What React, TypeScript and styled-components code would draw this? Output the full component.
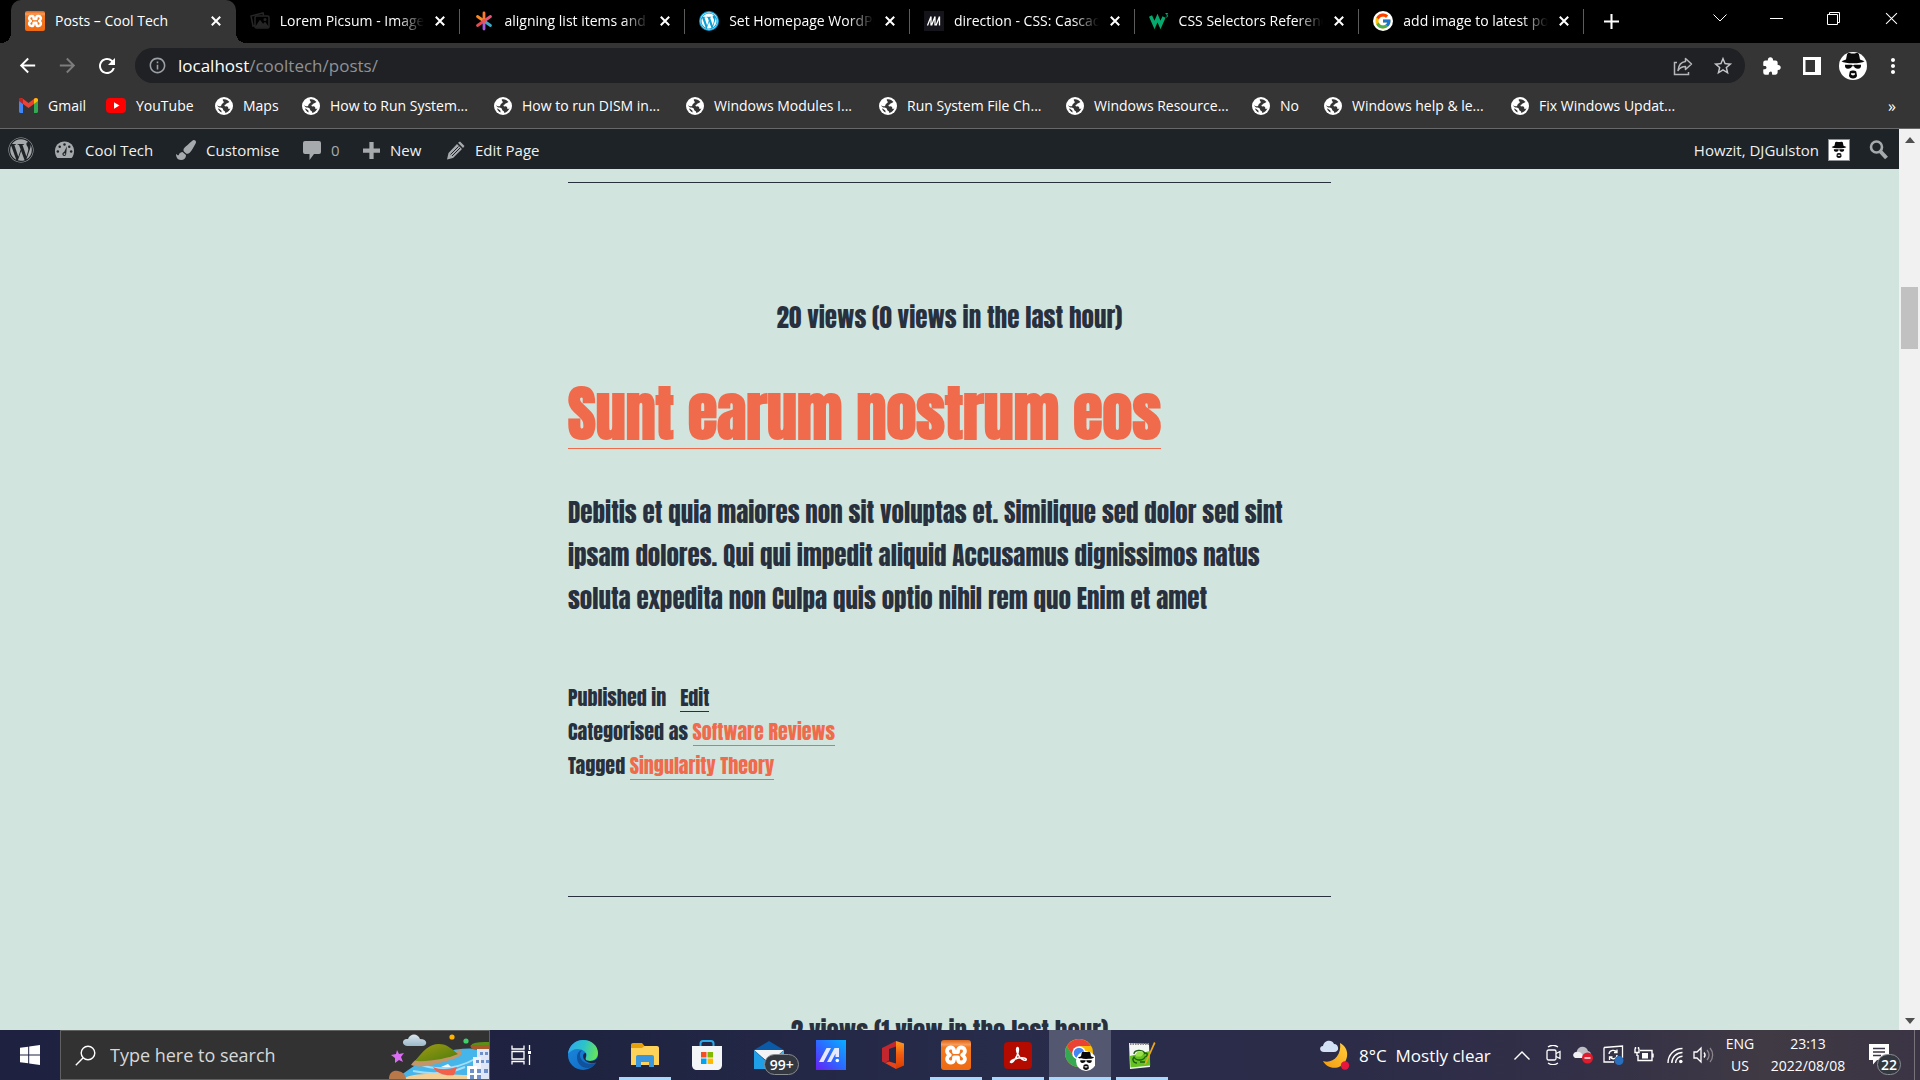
import React from "react";
import styled, { createGlobalStyle } from "styled-components";
import { FcGoogle } from "react-icons/fc";
import { FaWordpress, FaPaintBrush } from "react-icons/fa";
import { IoExtensionPuzzle } from "react-icons/io5";
import { MdStarOutline, MdInfoOutline, MdArrowBack, MdArrowForward, MdRefresh, MdMoreVert } from "react-icons/md";

const ui = `"Segoe UI", "Open Sans", "Noto Sans", sans-serif`;
const poster = `Impact, Anton, "Roboto Condensed", sans-serif`;

const Global = createGlobalStyle`
  * { box-sizing: border-box; }
  html, body { margin: 0; background: #d1e4dd; }
  body { font-family: ${ui}; overflow: hidden; }
  button, input { font: inherit; color: inherit; background: none; border: 0; padding: 0; margin: 0; outline: 0; }
  svg { display: block; flex: none; }
`;

const Screen = styled.div`
  display: flex;
  flex-direction: column;
  height: 100vh;
`;

/* ---------- browser chrome ---------- */

const TabStrip = styled.div`
  display: flex;
  flex: none;
  height: 43px;
  padding-left: 11px;
  background: #000;
  color: #fff;
`;
const Tabs = styled.div`
  display: flex;
  flex: 0 1 1573px;
  min-width: 0;
`;
const TabBox = styled.div<{ $active?: boolean }>`
  position: relative;
  display: flex;
  flex: 1 1 0;
  min-width: 0;
  align-items: center;
  gap: 8px;
  padding: 0 12px 1px 14px;
  border-radius: 10px 10px 0 0;
  background: ${(p) => (p.$active ? "#353535" : "transparent")};
  &::before, &::after {
    content: "";
    display: ${(p) => (p.$active ? "block" : "none")};
    position: absolute;
    bottom: 0;
    width: 10px;
    height: 10px;
  }
  &::before { left: -10px; background: radial-gradient(circle at 0 0, transparent 10px, #353535 10px); }
  &::after { right: -10px; background: radial-gradient(circle at 100% 0, transparent 10px, #353535 10px); }
`;
const TabDivider = styled.span<{ $hidden?: boolean }>`
  flex: none;
  width: 1px;
  height: 25px;
  margin-left: -1px;
  align-self: center;
  background: ${(p) => (p.$hidden ? "transparent" : "#5c5c5c")};
`;
const TabTitle = styled.button<{ $fade?: boolean }>`
  flex: 1;
  min-width: 0;
  overflow: hidden;
  padding-left: 2px;
  font-size: 14px;
  line-height: 20px;
  text-align: left;
  white-space: nowrap;
  mask-image: ${(p) => (p.$fade ? "linear-gradient(90deg, #000 82%, transparent 100%)" : "none")};
`;
const IconButton = styled.button<{ $w: number; $color?: string }>`
  display: flex;
  flex: none;
  align-items: center;
  justify-content: center;
  width: ${(p) => p.$w}px;
  color: ${(p) => p.$color || "#fff"};
`;
const WindowButtons = styled.div`
  display: flex;
  height: 36px;
  margin-left: auto;
`;

const Toolbar = styled.div`
  display: flex;
  flex: none;
  align-items: center;
  height: 45px;
  padding: 0 8px 0 7px;
  background: #353535;
`;
const AddressBar = styled.label`
  display: flex;
  flex: 1;
  align-items: center;
  min-width: 0;
  height: 35px;
  margin: 0 7px 0 8px;
  padding: 0 2px 0 13px;
  border-radius: 18px;
  background: #202124;
  color: #9aa0a6;
`;
const Address = styled.div`
  flex: 1;
  padding-left: 11px;
  font-size: 17px;
  line-height: 24px;
  color: #8f9296;
  b { font-weight: 400; color: #fff; }
`;
const Bookmarks = styled.nav`
  display: flex;
  flex: none;
  align-items: center;
  height: 41px;
  padding: 0 10px 5px 19px;
  border-bottom: 1px solid #66686a;
  background: #353535;
  color: #fff;
  & > button { margin-left: auto; }
`;
const Bookmark = styled.a<{ $w: number }>`
  display: flex;
  align-items: center;
  flex: none;
  gap: 10px;
  width: ${(p) => p.$w}px;
  font-size: 14px;
  line-height: 20px;
  white-space: nowrap;
  color: inherit;
  text-decoration: none;
`;

/* ---------- page ---------- */

const Viewport = styled.div`
  display: flex;
  flex: 1;
  min-height: 0;
`;
const Page = styled.div`
  display: flex;
  flex-direction: column;
  flex: 1;
  min-width: 0;
  overflow: hidden;
  background: #d1e4dd;
`;
const AdminBar = styled.header`
  display: flex;
  flex: none;
  align-items: center;
  height: 40px;
  padding: 2px 8px 0;
  background: #1d2327;
  color: #f0f0f1;
  font-size: 15px;
  line-height: 22px;
  svg { color: #a7aaad; }
`;
const AdminLink = styled.a<{ $w: number; $muted?: boolean }>`
  display: flex;
  flex: none;
  align-items: center;
  gap: 10px;
  width: ${(p) => p.$w}px;
  white-space: nowrap;
  color: ${(p) => (p.$muted ? "#a7aaad" : "inherit")};
  text-decoration: none;
`;
const Account = styled.a`
  display: flex;
  align-items: center;
  gap: 9px;
  margin: 0 17px 0 auto;
  color: inherit;
  text-decoration: none;
`;
const Avatar = styled.span`
  padding: 1px;
  border: 1px solid #8c8f94;
  background: #fff;
`;
const Column = styled.main`
  width: 763px;
  max-width: 100%;
  margin: 0 auto;
  font-family: ${poster};
  color: #28303d;
`;
const Post = styled.article`
  padding-top: 13px;
`;
const Rule = styled.hr`
  height: 1px;
  margin: 0;
  border: 0;
  background: #28303d;
`;
const Views = styled.p`
  margin: 114px 0 0;
  font-size: 25px;
  line-height: 42px;
  text-align: center;
`;
const Title = styled.h2`
  margin: 35px 0 0;
  font-size: 60px;
  line-height: 80px;
  font-weight: 700;
`;
const PostLink = styled.a<{ $dark?: boolean }>`
  display: inline-block;
  color: ${(p) => (p.$dark ? "#28303d" : "#f06b4c")};
  border-bottom: 1px solid;
  text-decoration: none;
`;
const TitleLink = styled(PostLink)`
  line-height: 68px;
`;
const Excerpt = styled.p`
  margin: 37px 0 61px;
  font-size: 25px;
  line-height: 43px;
`;
const Meta = styled.footer`
  padding-bottom: 113px;
  font-size: 20px;
  line-height: 34px;
  ${PostLink} { line-height: 27px; }
`;
const EditGap = styled.span`
  padding-right: 14px;
`;
const ScrollTrack = styled.div`
  display: flex;
  flex: none;
  flex-direction: column;
  justify-content: space-between;
  align-items: center;
  width: 21px;
  padding: 8px 0 6px;
  background: #f1f1f1;
`;
const Thumb = styled.div`
  flex: none;
  width: 17px;
  height: 62px;
  margin: 144px 0 auto;
  background: #c1c1c1;
`;

/* ---------- taskbar ---------- */

const Taskbar = styled.footer`
  display: flex;
  flex: none;
  height: 50px;
  background: linear-gradient(90deg, #1f2140 0, #1e2340 30%, #282c4b 52%, #2c2c48 70%, #322f47 82%, #403a44 92%, #3a3444 100%);
  color: #fff;
`;
const SearchBox = styled.label`
  display: flex;
  align-items: center;
  flex: none;
  width: 430px;
  padding-left: 14px;
  border: 1px solid #606060;
  background: #323232;
  overflow: hidden;
`;
const SearchInput = styled.input`
  flex: 1;
  min-width: 0;
  padding-left: 14px;
  font-size: 18px;
  &::placeholder { color: #d8d8d8; opacity: 1; }
`;
const Apps = styled.div`
  display: flex;
  flex: 0 1 621px;
`;
const AppButton = styled.button<{ $open?: boolean; $active?: boolean }>`
  position: relative;
  display: flex;
  flex: 1;
  align-items: center;
  justify-content: center;
  background: ${(p) => (p.$active ? "#545770" : "transparent")};
  &::after {
    content: "";
    position: absolute;
    bottom: 0;
    left: ${(p) => (p.$active ? 0 : 5)}px;
    right: ${(p) => (p.$active ? 0 : 5)}px;
    height: 3px;
    background: ${(p) => (p.$open ? "#a9d6fb" : "transparent")};
  }
`;
const Count = styled.span<{ $round?: boolean }>`
  position: absolute;
  left: ${(p) => (p.$round ? 13 : 26)}px;
  top: 24px;
  width: ${(p) => (p.$round ? 24 : 35)}px;
  height: 21px;
  border: 1px solid #8a8d93;
  border-radius: 11px;
  background: #33373f;
  font-size: 14px;
  font-weight: 600;
  line-height: 19px;
  text-align: center;
`;
const Tray = styled.div`
  display: flex;
  align-items: center;
  margin-left: auto;
`;
const Weather = styled.button`
  display: flex;
  align-items: center;
  gap: 9px;
  width: 184px;
  font-size: 17px;
  white-space: nowrap;
`;
const Stack = styled.button<{ $w: number }>`
  width: ${(p) => p.$w}px;
  height: 50px;
  padding-bottom: 1px;
  font-size: 14px;
  line-height: 22px;
  text-align: center;
`;
const Notices = styled.button`
  position: relative;
  width: 50px;
  height: 50px;
  margin-left: 13px;
  padding: 0 0 2px 5px;
`;
const DesktopEdge = styled.span`
  width: 6px;
  height: 50px;
  border-left: 1px solid #77727a;
`;

/* ---------- drawings ---------- */

const Close = ({ s = 10, w = 2 }: { s?: number; w?: number }) => (
  <svg width={s} height={s} viewBox="0 0 10 10" stroke="#fff" strokeWidth={w} fill="none"><path d="M.8.8 9.2 9.2M9.2.8.8 9.2" /></svg>
);
const Globe = () => (
  <svg width="18" height="18" viewBox="0 0 18 18">
    <circle cx="9" cy="9" r="9" fill="#fff" />
    <path d="M8 2.300c2.500-.5 5 .7 6.500 2.700-1 .2-1.300 1.300-2.300 1.300-1.200 0-1 1.500-2.200 1.500-.8.200-.7 1.700.8 1.600 2-.2 2.600.8 2.500 2.200 0 1 1.700.3 2.200-1.200-.5 2.800-2.500 5-5.300 5.500.2-1.500-.5-1.700-1.400-2.200-1-.6-.5-1.800-1.400-2.400-1.200-.8-2.700-.5-3.900-1.300C2.500 9.200 2.200 8.300 2.200 8c.6.800 2 1.600 3.300 1.200 1.200-.3.400-1.500 1.500-2.300 1.300-.8 2.200-1 1.600-2.300C8.200 3.600 7.200 3.200 8 2.300z" fill="#353535" />
    <path d="M3 11.500c1.500.3 2 1.200 3 1.800.8.600.5 1.700.4 2.100-1.600-.8-2.900-2.200-3.400-3.900z" fill="#353535" />
  </svg>
);
const Xampp = ({ s }: { s: number }) => (
  <svg width={s} height={s} viewBox="0 0 30 30">
    <defs><linearGradient id="xo" x1="0" y1="0" x2="0" y2="1"><stop stopColor="#d9641a" /><stop offset=".15" stopColor="#f99a58" /><stop offset=".25" stopColor="#f47a20" /><stop offset="1" stopColor="#ee6a12" /></linearGradient></defs>
    <rect width="30" height="30" rx="3" fill="url(#xo)" />
    <path d="M10 7.500c-4 0-5 4-2.500 6.500l1.300 1-1.300 1c-2.500 2.500-1.500 6.500 2.500 6.500 2 0 3-1.500 3-3.500v-1.500h4v1.500c0 2 1 3.500 3 3.500 4 0 5-4 2.500-6.500l-1.300-1 1.300-1c2.500-2.500 1.500-6.500-2.500-6.500-2 0-3 1.500-3 3v1.500h-4v-1.500c0-1.500-1-3-3-3z" fill="none" stroke="#fff" strokeWidth="3.800" strokeLinejoin="round" />
  </svg>
);
const PictureStack = () => (
  <svg width="20" height="20" viewBox="0 0 20 20" fill="none" stroke="#262626" strokeWidth="1.500">
    <path d="M5 14.500 3 15 1 5l12-3 .6 2.500" /><rect x="5" y="5" width="14" height="12" rx="1.500" /><path d="m6 16 4-6 3 4 2-2 3 4z" fill="#262626" /><circle cx="15" cy="8.500" r=".8" />
  </svg>
);
const Asterisk = () => (
  <svg width="20" height="20" viewBox="0 0 20 20" strokeWidth="2.800" strokeLinecap="round">
    <path d="M10 10V2" stroke="#fb7a2e" /><path d="M10 10 3.500 5.500" stroke="#f78a25" /><path d="m10 10 6.500-4.500" stroke="#e4557c" />
    <path d="M10 10 3.500 14.500" stroke="#e8484a" /><path d="M10 10v8" stroke="#a55be0" /><path d="m10 10 6.500 4.500" stroke="#3fa9c4" /><circle cx="10" cy="10" r="2" fill="#ef5350" />
  </svg>
);
const WpFav = () => (
  <svg width="20" height="20" viewBox="0 0 20 20"><circle cx="10" cy="10" r="10" fill="#0c9fd6" /><foreignObject x="1" y="1" width="18" height="18"><FaWordpress size={18} color="#fff" /></foreignObject></svg>
);
const Mdn = () => (
  <svg width="20" height="20" viewBox="0 0 20 20"><rect width="20" height="20" fill="#15141a" /><path d="m3.500 14.500 3.500-9M7.500 14.500l3.500-9M12 14.500l3.500-9M7 5.500v9M11 5.500v9M15.500 5.500v9" fill="none" stroke="#fff" strokeWidth="1.300" /></svg>
);
const W3 = () => (
  <svg width="20" height="20" viewBox="0 0 20 20" fill="none" stroke="#04aa6d"><path d="m1.500 5 4 9L8.500 7l3 7 3.500-8" strokeWidth="3.400" /><path d="M16.500 2.500h2.200L17.500 4c1.800 0 1.800 2.500-.8 2" strokeWidth="1" /></svg>
);
const Gmail = () => (
  <svg width="19" height="15" viewBox="0 0 19 15"><path d="M0 2v11.500C0 14.300.7 15 1.500 15H4V6z" fill="#4285f4" /><path d="M19 2v11.500c0 .8-.7 1.500-1.500 1.500H15V6z" fill="#34a853" /><path d="M0 2.200C0 .4 2-.6 3.500.6L9.500 5l6-4.400C17-.6 19 .4 19 2.200V3l-9.500 7L0 3z" fill="#ea4335" /><path d="M15 1v5l4-3v-.8C19 .4 17-.6 15.500.6z" fill="#fbbc04" /><path d="M0 2.200C0 1 1 0 2 0l2 1v5L0 3z" fill="#c5221f" /></svg>
);
const YouTube = () => (
  <svg width="20" height="15" viewBox="0 0 20 15"><rect width="20" height="15" rx="4" fill="#f00" /><path d="m8 4.300 5.500 3.200L8 10.700z" fill="#fff" /></svg>
);
const Heisenberg = ({ s, square }: { s: number; square?: boolean }) => (
  <svg width={s} height={s} viewBox="0 0 28 28">
    {square ? <rect width="28" height="28" fill="#fff" /> : <circle cx="14" cy="14" r="14" fill="#fff" />}
    <path d="M7 7.500 8 2.500C8.500.8 10.500.8 12 1.500h4c1.500-.7 3.500-.7 4 1l1 5 4.500 1.700c-2 1.600-6 2-11.500 2S4.500 10.800 2.500 9.200z" fill="#090909" />
    <path d="M6 12.800h6.500l1.500.8 1.500-.8H22c.3 2.500-.8 3.900-3 3.900s-3.600-.9-4-2.400h-2c-.4 1.500-1.800 2.400-4 2.400s-3.300-1.400-3-3.900z" fill="#090909" />
    <path d="M10.800 19.500c1.500-1.300 4.900-1.300 6.400 0l.8 4c0 4-8 4-8 0z" fill="#090909" /><path d="M12 21.300h4v1.500h-1l-1 1-1-1h-1z" fill="#fff" />
  </svg>
);
const Share = () => (
  <svg width="20" height="20" viewBox="0 0 20 20" fill="none" stroke="currentColor" strokeWidth="1.500"><path d="M4 6.500H1.500v12h14V16" /><path d="M12.500 2.500 18.500 8l-6 5.500V10.500C9 10.500 7 11.500 5 14.500 5.500 9.500 8 6 12.500 5.500z" strokeLinejoin="round" /></svg>
);
const Gauge = () => (
  <svg width="21" height="20" viewBox="0 0 22 20"><path d="M11 1C5 1 1 5.500 1 11c0 3 1 5.500 2.500 7.500h15C20 16.500 21 14 21 11 21 5.500 17 1 11 1z" fill="#a7aaad" /><g fill="#1d2327"><circle cx="4" cy="11.500" r="1.300" /><circle cx="6" cy="6.500" r="1.300" /><circle cx="11" cy="4.300" r="1.300" /><circle cx="18" cy="11.500" r="1.300" /><circle cx="16" cy="6.500" r="1.300" /><path d="m13.500 6-.7 8c0 3-4 3-4 .3 0-1.300 1-2 1.800-2.300z" /></g><circle cx="11" cy="14.300" r="1" fill="#a7aaad" /></svg>
);
const Comment = () => (
  <svg width="18" height="20" viewBox="0 0 18 20" fill="#a7aaad"><path d="M2 1h14a2 2 0 0 1 2 2v9a2 2 0 0 1-2 2h-5l-4.500 6V14H2a2 2 0 0 1-2-2V3a2 2 0 0 1 2-2z" /></svg>
);
const Plus = ({ s, w, c }: { s: number; w: number; c: string }) => (
  <svg width={s} height={s} viewBox="0 0 16 16" stroke={c} strokeWidth={w}><path d="M8 0v16M0 8h16" /></svg>
);
const Pencil = () => (
  <svg width="19" height="19" viewBox="0 0 19 19" fill="#a7aaad"><path d="m12 1.800 2-1.300 4.500 4.500-1.500 2zM11 3l5 5L7 17l-6 1.500L2.500 12z" /><path d="m12.500 5.500-8 8M14 7l-8 8" stroke="#1d2327" strokeWidth="1" /></svg>
);
const Lens = () => (
  <svg width="20" height="20" viewBox="0 0 20 20" fill="none" stroke="#a7aaad"><circle cx="7.500" cy="7" r="5.500" strokeWidth="2.600" /><path d="m11.500 11.500 6 6.500" strokeWidth="4" /></svg>
);
const Windows = () => (
  <svg width="20" height="20" viewBox="0 0 20 20" fill="#fff"><path d="M0 2.800 8.200 1.700v7.800H0zM9.200 1.500 20 0v9.500H9.200zM0 10.500h8.200v7.800L0 17.200zM9.200 10.500H20V20L9.200 18.500z" /></svg>
);
const ThinLens = () => (
  <svg width="21" height="21" viewBox="0 0 21 21" fill="none" stroke="#fff" strokeWidth="1.400"><circle cx="13" cy="8" r="6.800" /><path d="M8.200 12.800.8 20.300" /></svg>
);
const Island = () => (
  <svg width="100" height="48" viewBox="0 0 100 48">
    <defs><linearGradient id="hill" x1="0" y1="0" x2="1" y2="1"><stop stopColor="#a39a12" /><stop offset="1" stopColor="#4a7d0c" /></linearGradient><linearGradient id="cl" x1="0" y1="0" x2="0" y2="1"><stop stopColor="#d8e6ee" /><stop offset="1" stopColor="#9db8c8" /></linearGradient></defs>
    <path d="M6 48C22 38 34 26 52 22c20-6 36-5 48-2v28z" fill="#45b5ea" /><path d="M30 33c20 8 40 4 58-6M24 40c20 4 38 2 52-4" stroke="#a4def8" strokeWidth="2" fill="none" />
    <path d="M14 48c10-7 30-5 66-4v4z" fill="#f3cf96" />
    <path d="M22 34c4-7 12-8 20-9l29-6c5 3-1 8-10 10-14 4-28 9-39 5z" fill="#c29668" />
    <path d="M26 30C34 20 40 13 50 13c8 0 13 5 19 10-9 4-28 8-43 7z" fill="url(#hill)" />
    <path d="M82 14c4-2 10-2 18-2v7H88c-4 0-8-3-6-5z" fill="#a85a2a" /><path d="M83 13c5-2 10-2 17-2v3H83z" fill="#5d8f16" />
    <path d="M88 18h12v30H88z" fill="#dfe6f5" /><path d="M84 26h8v22h-8z" fill="#f0f3fb" /><path d="M78 35h10v13H78z" fill="#fff" />
    <path d="M91 21h3v3h-3zM96 21h3v3h-3zM87 29h3v3h-3zM92 29h3v3h-3zM97 29h3v3h-3zM81 38h4v4h-4zM88 38h4v4h-4zM95 38h4v4h-4zM81 44h4v4h-4zM88 44h4v4h-4z" fill="#6f8fc9" />
    <path d="M44 36c7 3 16 3 24 0l-3 8c-8 1-17-1-21-8z" fill="#f2604a" /><path d="m52 36 7-3 3 3z" fill="#fff" />
    <path d="M0 48c0-7 5-9 9-8 5 1 8 4 8 8z" fill="#b8784a" />
    <path d="M18 15c-6-1-5-8 1-7 2-6 10-6 12 0 8 0 8 7 2 7z" fill="url(#cl)" />
    <path d="m8 19 2 4 5-1-3 4 2 5-4-2-4 3 0-5-4-3 5-1z" fill="#dc6df5" /><circle cx="63" cy="6" r="2.600" fill="#ffb300" /><circle cx="77" cy="10" r="2.600" fill="#3fd06a" />
  </svg>
);
const TaskView = () => (
  <svg width="21" height="20" viewBox="0 0 21 20" fill="none" stroke="#fff" strokeWidth="1.300"><path d="M1 .500V4h12V.500M1 19.500V16.500h12v3M1 6.500h12V14H1zM18.500 0v5M18.500 10v10" /><path d="M17 6h3v3h-3z" fill="#fff" stroke="none" /></svg>
);
const Edge = () => (
  <svg width="30" height="30" viewBox="0 0 30 30">
    <defs><linearGradient id="e1" x1="0" y1=".3" x2="1" y2=".5"><stop stopColor="#2fa8ee" /><stop offset=".5" stopColor="#2cc3c9" /><stop offset="1" stopColor="#66e35a" /></linearGradient><linearGradient id="e2" x1="0" y1="0" x2="1" y2="1"><stop stopColor="#1b8be0" /><stop offset="1" stopColor="#0f66bd" /></linearGradient></defs>
    <circle cx="15" cy="15" r="15" fill="url(#e2)" />
    <path d="M0 14C1 5 8 0 15 0c9 0 15 6 15 13 0 5-4 8-8 8-3 0-4.500-1-4.500-2 0-1 1-1.500 1-4 0-3-4-6-9-6-4 0-7.500 2-9.500 5z" fill="url(#e1)" />
    <path d="M10 13c-3 6 1 15 9 15 4 0 7-2 9-5-1 0-3 1.500-7 1-6-1-9-5-9-9 0-2 1-4 2-5-1 0-3 1-4 3z" fill="#11529c" />
    <path d="M17.500 19c0 1 1.500 2 4.500 2 4 0 6-1 8-4l0 5-4 1c-6 1-11-3-11-7 0-2 1.500-3.500 3-3 .5 3-.5 4.500-.5 6z" fill="#1f2441" />
  </svg>
);
const Explorer = () => (
  <svg width="28" height="24" viewBox="0 0 28 24"><path d="M0 2C0 .8.800 0 2 0h9l2.500 3v4H0z" fill="#e6a10a" /><path d="M0 5h11l2.500-2H26c1.200 0 2 .8 2 2v17H0z" fill="#ffd35a" /><path d="M5 24V14c0-1.200.8-2 2-2h14c1.200 0 2 .8 2 2v10h-5v-5h-8v5z" fill="#3a96dd" /></svg>
);
const Store = () => (
  <svg width="30" height="30" viewBox="0 0 30 30"><path d="M8.500 7V3.500C8.500 2 9.500 1 11 1h8c1.500 0 2.500 1 2.500 2.500V7" fill="none" stroke="#29a9ea" strokeWidth="2" /><path d="M0 6h30v19c0 3-2 5-5 5H5c-3 0-5-2-5-5z" fill="#f4f5f7" /><path d="M9 12h5.500v5.500H9z" fill="#f25022" /><path d="M15.500 12H21v5.500h-5.500z" fill="#7fba00" /><path d="M9 18.500h5.500V24H9z" fill="#00a4ef" /><path d="M15.500 18.500H21V24h-5.500z" fill="#ffb900" /></svg>
);
const Mail = () => (
  <svg width="30" height="28" viewBox="0 0 30 28"><path d="m0 9 15-9 15 9z" fill="#0a5aa8" /><path d="M0 9h30L15 22z" fill="#f2f4f6" /><path d="m0 9 20 19H0z" fill="#1f9fe8" /><path d="M30 9 10 28h20z" fill="#3bb8f5" /></svg>
);
const MyAsus = () => (
  <svg width="30" height="30" viewBox="0 0 30 30"><defs><linearGradient id="ma" x1="0" y1="1" x2="1" y2="0"><stop stopColor="#6a1ff5" /><stop offset=".5" stopColor="#2b6bff" /><stop offset="1" stopColor="#08b0ff" /></linearGradient></defs><rect width="30" height="30" fill="url(#ma)" /><path d="m3 22 7.500-14H15L7.500 22zM11 22l7.500-14H23v9h-3.500v-3.500L15 22z" fill="#e6e9ff" /><circle cx="21.300" cy="20.500" r="1.800" fill="#fff" /></svg>
);
const Office = () => (
  <svg width="23" height="28" viewBox="0 0 23 28">
    <defs><linearGradient id="of" x1="0" y1="0" x2="0" y2="1"><stop stopColor="#ff9a1f" /><stop offset=".5" stopColor="#ef5a10" /><stop offset="1" stopColor="#d83b01" /></linearGradient></defs>
    <path d="m0 7 14-7v5.500L7 8v11.500l-4 2.500-3-1.500z" fill="#c4262e" /><path d="m14 0 8 2.500v22L14 28z" fill="url(#of)" /><path d="m3 22 4-1.500 7 2V28z" fill="#e8431f" />
  </svg>
);
const Acrobat = () => (
  <svg width="28" height="27" viewBox="0 0 28 27"><rect width="28" height="27" rx="4" fill="#b30b00" /><path d="M6.500 20c1 1.500 4-1 6.500-6.500C15 9 14.500 5.500 13.500 5.500s-1.500 3 .5 7 6 6.500 8 5.500c1-1-1-2.500-5-2.200-4 .2-10 2-10.500 4.200z" fill="none" stroke="#fff" strokeWidth="1.600" /></svg>
);
const Chrome = () => (
  <svg width="30" height="32" viewBox="0 0 30 32"><circle cx="14" cy="14" r="14" fill="#fbbc05" /><path d="M1.900 7A14 14 0 0 1 26.100 7H14z" fill="#ea4335" /><path d="M1.900 7A14 14 0 0 0 12 27.900L18 17 8 17z" fill="#34a853" /><path d="M1.900 7 8 17l6-10z" fill="#ea4335" /><circle cx="14" cy="14" r="6.800" fill="#fff" /><circle cx="14" cy="14" r="5.300" fill="#4285f4" /><g transform="translate(11 12)"><Heisenberg s={20} /></g></svg>
);
const NotepadPP = () => (
  <svg width="28" height="28" viewBox="0 0 28 28"><path d="m1 2 20 1 1 23-20 2z" fill="#f5f7f4" /><path d="m2 15 19.700-5 .5 14.500L2.500 26.500z" fill="#63c21e" /><path d="M2 3h19" stroke="#8a8a8a" strokeWidth="2" strokeDasharray="1.500 1" /><path d="M6 13c0-4 8-5 11-1 3 0 3 3 0 4-2 4-9 4-11 0-2 2-1 6 3 6M15 12.500h2M12 21h5" fill="none" stroke="#1f5d10" strokeWidth="1.300" /><path d="M8 12.500c2-3 6-3 8 0l-3 3H8z" fill="#9be04a" /><path d="m26 1 1.500 1L18 23l-1.500 1 .3-2z" fill="#eda71e" /></svg>
);
const Moon = () => (
  <svg width="30" height="30" viewBox="0 0 30 30"><defs><linearGradient id="mo" x1="0" y1="1" x2="1" y2="0"><stop stopColor="#f29b12" /><stop offset="1" stopColor="#ffcd3a" /></linearGradient></defs><path d="M20 3c10 5 9 18 1 23-7 4-15 1-18-5 9 3 19-5 17-18z" fill="url(#mo)" /><path d="M4 12c-5 0-5-6-1-6 1-6 9-7 11-2 5 0 6 8 0 8z" fill="#d3e1f5" /><circle cx="25" cy="25.500" r="4.200" fill="#e5173f" /></svg>
);
const Meet = () => (
  <svg width="16" height="20" viewBox="0 0 16 20" fill="none" stroke="#fff" strokeWidth="1.300"><rect x="1" y="5" width="9" height="10" rx="1.500" /><path d="m10 8.500 4-2v7l-4-2M2 2c3-2 7-2 10 0M2 18c3 2 7 2 10 0" /></svg>
);
const Cloud = () => (
  <svg width="20" height="18" viewBox="0 0 20 18"><path d="M3 12c-4-.5-3.500-6 .5-6C5-.5 13-1 15 5c4 .5 4 7 0 7z" fill="#bdbdc4" /><path d="M2.500 12c-3-1-3-6 1.500-6 3-1 5 1 7 6z" fill="#f2f2f4" /><circle cx="14.500" cy="12" r="5.500" fill="#e01b2c" /><path d="M11.500 12h6" stroke="#fff" strokeWidth="1.400" /></svg>
);
const Sync = () => (
  <svg width="21" height="20" viewBox="0 0 21 20" fill="none" stroke="#fff" strokeWidth="1.300"><path d="M1 2.500 19.500 1v12M1 2.500V17h10M6 9c.5-4 6-5 8-1.500M14 4.500v3h-3M14 10c0 4-5 5-7 2M6.500 15v-3h3" /><circle cx="16" cy="15.500" r="4.500" fill="#2a6fbd" stroke="none" /></svg>
);
const Battery = () => (
  <svg width="20" height="16" viewBox="0 0 20 16" fill="none" stroke="#fff" strokeWidth="1.400"><path d="M6 3.500h12v10H4V8M19 6.500v4" /><path d="M8 6h6v5.500H8z" fill="#fff" stroke="none" /><path d="M1 1.500v4h4v-4M3 5.500V9M1.500 0v2M4.500 0v2" /></svg>
);
const Wifi = () => (
  <svg width="17" height="17" viewBox="0 0 17 17" fill="none" stroke="#fff" strokeWidth="1.400"><path d="M1 16C1 8 7 1.500 15.500 1.500M4.800 16c0-6 5-10.500 10.700-10.500M8.600 16c0-4 3.400-6.800 6.900-6.800" /><circle cx="13.800" cy="14.500" r="1.800" fill="#fff" stroke="none" /></svg>
);
const Speaker = () => (
  <svg width="21" height="18" viewBox="0 0 21 18" fill="none" stroke="#fff" strokeWidth="1.300"><path d="M1 6h3l4-4v14l-4-4H1z" /><path d="M11 6.500c1.300 1.500 1.300 3.500 0 5" /><path d="M14 4c2.500 3 2.500 7 0 10M17 2c3.500 4 3.500 10 0 14" stroke="#8b868d" /></svg>
);
const Note = () => (
  <svg width="20" height="21" viewBox="0 0 20 21"><path d="M0 0h20v16H8l-4 4.500V16H0z" fill="#fff" /><path d="M4 4.500h12M4 8h12M4 11.500h8" stroke="#3a3544" strokeWidth="1.300" /></svg>
);
const GoogleDisk = styled(FcGoogle)`
  padding: 1px;
  border-radius: 50%;
  background: #fff;
`;

/* ---------- data ---------- */

const tabs = [
  { title: "Posts – Cool Tech", icon: <Xampp s={20} /> },
  { title: "Lorem Picsum - Images", icon: <PictureStack /> },
  { title: "aligning list items and", icon: <Asterisk /> },
  { title: "Set Homepage WordPress", icon: <WpFav /> },
  { title: "direction - CSS: Cascading", icon: <Mdn /> },
  { title: "CSS Selectors Reference", icon: <W3 /> },
  { title: "add image to latest posts", icon: <GoogleDisk size={20} /> },
];

const bookmarks = [
  { label: "Gmail", w: 87, icon: <Gmail /> },
  { label: "YouTube", w: 109, icon: <YouTube /> },
  { label: "Maps", w: 87 },
  { label: "How to Run System...", w: 192 },
  { label: "How to run DISM in...", w: 192 },
  { label: "Windows Modules I...", w: 193 },
  { label: "Run System File Ch...", w: 187 },
  { label: "Windows Resource...", w: 186 },
  { label: "No", w: 72 },
  { label: "Windows help & le...", w: 187 },
  { label: "Fix Windows Updat...", w: 187 },
];

const apps = [
  { name: "Edge", icon: <Edge /> },
  { name: "File Explorer", icon: <Explorer />, open: true },
  { name: "Store", icon: <Store /> },
  { name: "Mail", icon: <Mail />, count: "99+" },
  { name: "MyASUS", icon: <MyAsus /> },
  { name: "Office", icon: <Office /> },
  { name: "XAMPP", icon: <Xampp s={30} />, open: true },
  { name: "Acrobat", icon: <Acrobat />, open: true },
  { name: "Chrome", icon: <Chrome />, open: true, active: true },
  { name: "Notepad++", icon: <NotepadPP />, open: true },
];

export default function App() {
  return (
    <Screen>
      <Global />
      <TabStrip>
        <Tabs>
          {tabs.map((t, i) => (
            <React.Fragment key={t.title}>
              <TabBox $active={i === 0}>
                {t.icon}
                <TabTitle $fade={i > 0}>{t.title}</TabTitle>
                <IconButton $w={16} aria-label="Close tab"><Close /></IconButton>
              </TabBox>
              <TabDivider $hidden={i === 0} />
            </React.Fragment>
          ))}
        </Tabs>
        <IconButton $w={54} aria-label="New tab"><Plus s={15} w={2.2} c="#fff" /></IconButton>
        <WindowButtons>
          <IconButton $w={57} aria-label="Search tabs"><svg width="14" height="8" viewBox="0 0 14 8" fill="none" stroke="#fff"><path d="m.5.5 6.500 6.500L13.500.5" /></svg></IconButton>
          <IconButton $w={57} aria-label="Minimise"><svg width="13" height="1" viewBox="0 0 13 1"><path d="M0 0h13v1H0z" fill="#fff" /></svg></IconButton>
          <IconButton $w={57} aria-label="Restore"><svg width="13" height="13" viewBox="0 0 13 13" fill="none" stroke="#fff"><path d="M.5 2.500h10v10H.5zM2.500 2.500v-2h10v10h-2" /></svg></IconButton>
          <IconButton $w={58} aria-label="Close"><Close s={13} w={0.8} /></IconButton>
        </WindowButtons>
      </TabStrip>

      <Toolbar>
        <IconButton $w={40} aria-label="Back"><MdArrowBack size={23} /></IconButton>
        <IconButton $w={40} $color="#7d7d7d" aria-label="Forward"><MdArrowForward size={23} /></IconButton>
        <IconButton $w={40} aria-label="Reload"><MdRefresh size={24} /></IconButton>
        <AddressBar>
          <MdInfoOutline size={19} />
          <Address><b>localhost</b>/cooltech/posts/</Address>
          <IconButton $w={40} $color="#b4b6b9" aria-label="Share"><Share /></IconButton>
          <IconButton $w={40} $color="#c4c6c9" aria-label="Bookmark this page"><MdStarOutline size={22} /></IconButton>
        </AddressBar>
        <IconButton $w={40} aria-label="Extensions"><IoExtensionPuzzle size={20} /></IconButton>
        <IconButton $w={40} aria-label="Side panel"><svg width="18" height="18" viewBox="0 0 18 18"><path d="M0 0h18v18H0zM2.500 3v12H12V3z" fill="#fff" fillRule="evenodd" /></svg></IconButton>
        <IconButton $w={41} aria-label="Profile"><Heisenberg s={28} /></IconButton>
        <IconButton $w={39} aria-label="Menu"><MdMoreVert size={24} /></IconButton>
      </Toolbar>
      <Bookmarks>
        {bookmarks.map((b) => (
          <Bookmark key={b.label} href="#" $w={b.w}>{b.icon || <Globe />}{b.label}</Bookmark>
        ))}
        <IconButton $w={36} aria-label="More bookmarks">»</IconButton>
      </Bookmarks>

      <Viewport>
        <Page>
          <AdminBar>
            <AdminLink href="#" $w={46} aria-label="WordPress"><FaWordpress size={26} /></AdminLink>
            <AdminLink href="#" $w={122}><Gauge />Cool Tech</AdminLink>
            <AdminLink href="#" $w={127}><FaPaintBrush size={20} />Customise</AdminLink>
            <AdminLink href="#" $w={60} $muted><Comment />0</AdminLink>
            <AdminLink href="#" $w={83}><Plus s={17} w={4} c="#a7aaad" />New</AdminLink>
            <AdminLink href="#" $w={100}><Pencil />Edit Page</AdminLink>
            <Account href="#">Howzit, DJGulston<Avatar><Heisenberg s={18} square /></Avatar></Account>
            <IconButton $w={24} aria-label="Search"><Lens /></IconButton>
          </AdminBar>
          <Column>
            <Post>
              <Rule />
              <Views>20 views (0 views in the last hour)</Views>
              <Title><TitleLink href="#">Sunt earum nostrum eos</TitleLink></Title>
              <Excerpt>
                Debitis et quia maiores non sit voluptas et. Similique sed dolor sed sint<br />
                ipsam dolores. Qui qui impedit aliquid Accusamus dignissimos natus<br />
                soluta expedita non Culpa quis optio nihil rem quo Enim et amet
              </Excerpt>
              <Meta>
                <div><EditGap>Published in</EditGap><PostLink $dark href="#">Edit</PostLink></div>
                <div>Categorised as <PostLink href="#">Software Reviews</PostLink></div>
                <div>Tagged <PostLink href="#">Singularity Theory</PostLink></div>
              </Meta>
            </Post>
            <Rule />
            <Views>2 views (1 view in the last hour)</Views>
          </Column>
        </Page>
        <ScrollTrack>
          <svg width="10" height="6" viewBox="0 0 10 6"><path d="m5 0 5 6H0z" fill="#505050" /></svg>
          <Thumb />
          <svg width="10" height="6" viewBox="0 0 10 6"><path d="m5 6 5-6H0z" fill="#505050" /></svg>
        </ScrollTrack>
      </Viewport>

      <Taskbar>
        <IconButton $w={60} aria-label="Start"><Windows /></IconButton>
        <SearchBox>
          <ThinLens />
          <SearchInput placeholder="Type here to search" aria-label="Type here to search" />
          <Island />
        </SearchBox>
        <IconButton $w={62} aria-label="Task view"><TaskView /></IconButton>
        <Apps>
          {apps.map((a) => (
            <AppButton key={a.name} $open={a.open} $active={a.active} aria-label={a.name}>
              {a.icon}
              {a.count && <Count>{a.count}</Count>}
            </AppButton>
          ))}
        </Apps>
        <Tray>
          <Weather><Moon /><span>8°C&nbsp;&nbsp;Mostly clear</span></Weather>
          <IconButton $w={36} aria-label="Hidden icons"><svg width="16" height="9" viewBox="0 0 16 9" fill="none" stroke="#fff" strokeWidth="1.400"><path d="M.5 8.500 8 1l7.500 7.500" /></svg></IconButton>
          <IconButton $w={28} aria-label="Meet now"><Meet /></IconButton>
          <IconButton $w={30} aria-label="OneDrive"><Cloud /></IconButton>
          <IconButton $w={30} aria-label="Update"><Sync /></IconButton>
          <IconButton $w={31} aria-label="Battery"><Battery /></IconButton>
          <IconButton $w={32} aria-label="Network"><Wifi /></IconButton>
          <IconButton $w={24} aria-label="Volume"><Speaker /></IconButton>
          <Stack $w={50}>ENG<br />US</Stack>
          <Stack $w={86}>23:13<br />2022/08/08</Stack>
          <Notices aria-label="Notifications"><Note /><Count $round>22</Count></Notices>
          <DesktopEdge />
        </Tray>
      </Taskbar>
    </Screen>
  );
}
